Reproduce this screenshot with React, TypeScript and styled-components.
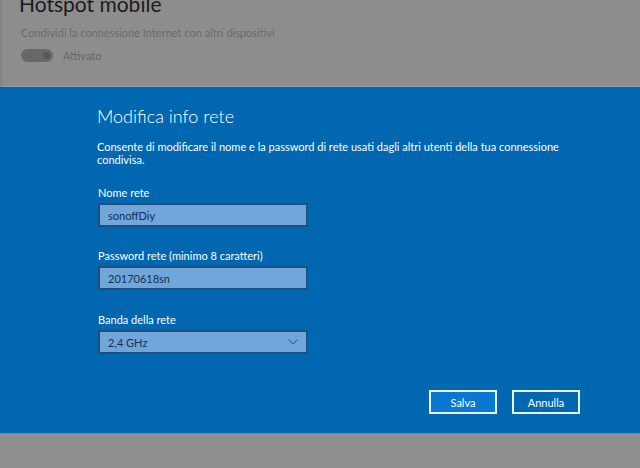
import React from "react";
import styled, { createGlobalStyle } from "styled-components";

const Global = createGlobalStyle`
  html, body { margin: 0; padding: 0; }
  body { width: 640px; height: 468px; overflow: hidden; background: #8e8d8e; font-family: Lato, "Noto Sans", sans-serif; }
`;

const Page = styled.div`
  width: 640px;
  height: 468px;
  display: flex;
  flex-direction: column;
  background: #8e8d8e;
`;

const Backdrop = styled.section`
  height: 87px;
  box-sizing: border-box;
  padding-left: 19px;
  border-left: 2px solid #858585;
  display: flex;
  flex-direction: column;
  overflow: hidden;
  border-bottom: 1px solid #8aa2b4;
`;

const PageTitle = styled.h1`
  margin: -10px 0 0 -2px;
  font-size: 21px;
  font-weight: 400;
  line-height: 28px;
  color: #1b1b1b;
`;

const PageSub = styled.div`
  margin-top: 8px;
  font-size: 11px;
  line-height: 14px;
  color: #6b6b6b;
`;

const ToggleRow = styled.div`
  margin-top: 9px;
  display: flex;
  align-items: center;
  gap: 10px;
  font-size: 11px;
  color: #666;
`;

const Toggle = styled.div`
  width: 32px;
  height: 13px;
  border-radius: 7px;
  background: #686868;
  position: relative;
  &::after {
    content: "";
    position: absolute;
    right: 3px;
    top: 3px;
    width: 7px;
    height: 7px;
    border-radius: 50%;
    background: #575757;
  }
`;

const Dialog = styled.section`
  height: 346px;
  background: #0067b0;
  box-sizing: border-box;
  padding: 16px 60px 0 97px;
  color: #fff;
  display: flex;
  flex-direction: column;
`;

const DialogTitle = styled.h2`
  margin: 0;
  font-size: 18px;
  font-weight: 300;
  line-height: 26px;
`;

const Desc = styled.p`
  margin: 11px 0 0;
  font-size: 11px;
  line-height: 13px;
  max-width: 470px;
`;

const Field = styled.div<{ $gap: number }>`
  display: flex;
  flex-direction: column;
  margin-top: ${(p) => p.$gap}px;
`;

const Label = styled.label`
  font-size: 11px;
  line-height: 14px;
  padding-left: 1px;
  margin-bottom: 3px;
`;

const Input = styled.div`
  width: 210px;
  height: 24px;
  box-sizing: border-box;
  border: 2px solid #1f4f80;
  background: #70a6da;
  color: #15304c;
  font-size: 11px;
  display: flex;
  align-items: center;
  justify-content: space-between;
  padding: 0 8px 0 8px;
  margin-left: 1px;
`;

const Buttons = styled.div`
  margin-top: auto;
  margin-bottom: 19px;
  align-self: flex-end;
  display: flex;
  gap: 15px;
`;

const Button = styled.button<{ $primary?: boolean }>`
  width: 68px;
  height: 24px;
  box-sizing: border-box;
  border: 2px solid #eaf3fb;
  background: ${(p) => (p.$primary ? "#0a78d2" : "#0067b0")};
  color: #fff;
  font-family: Lato, sans-serif;
  font-size: 11px;
  padding: 0;
`;

const Bottom = styled.div`
  flex: 1;
  background: #8f8d8e;
  border-top: 1px solid #5d93a8;
`;

export default function App() {
  return (
    <Page>
      <Global />
      <Backdrop>
        <PageTitle>Hotspot mobile</PageTitle>
        <PageSub>Condividi la connessione Internet con altri dispositivi</PageSub>
        <ToggleRow>
          <Toggle />
          <span>Attivato</span>
        </ToggleRow>
      </Backdrop>
      <Dialog>
        <DialogTitle>Modifica info rete</DialogTitle>
        <Desc>
          Consente di modificare il nome e la password di rete usati dagli altri utenti della tua connessione condivisa.
        </Desc>
        <Field $gap={20}>
          <Label>Nome rete</Label>
          <Input>sonoffDiy</Input>
        </Field>
        <Field $gap={22}>
          <Label>Password rete (minimo 8 caratteri)</Label>
          <Input>20170618sn</Input>
        </Field>
        <Field $gap={23}>
          <Label>Banda della rete</Label>
          <Input>
            <span>2,4 GHz</span>
            <svg width="10" height="6" viewBox="0 0 10 6" fill="none">
              <path d="M0.5 0.6 L5 5 L9.5 0.6" stroke="#3e6c99" strokeWidth="1.1" />
            </svg>
          </Input>
        </Field>
        <Buttons>
          <Button $primary>Salva</Button>
          <Button>Annulla</Button>
        </Buttons>
      </Dialog>
      <Bottom />
    </Page>
  );
}
